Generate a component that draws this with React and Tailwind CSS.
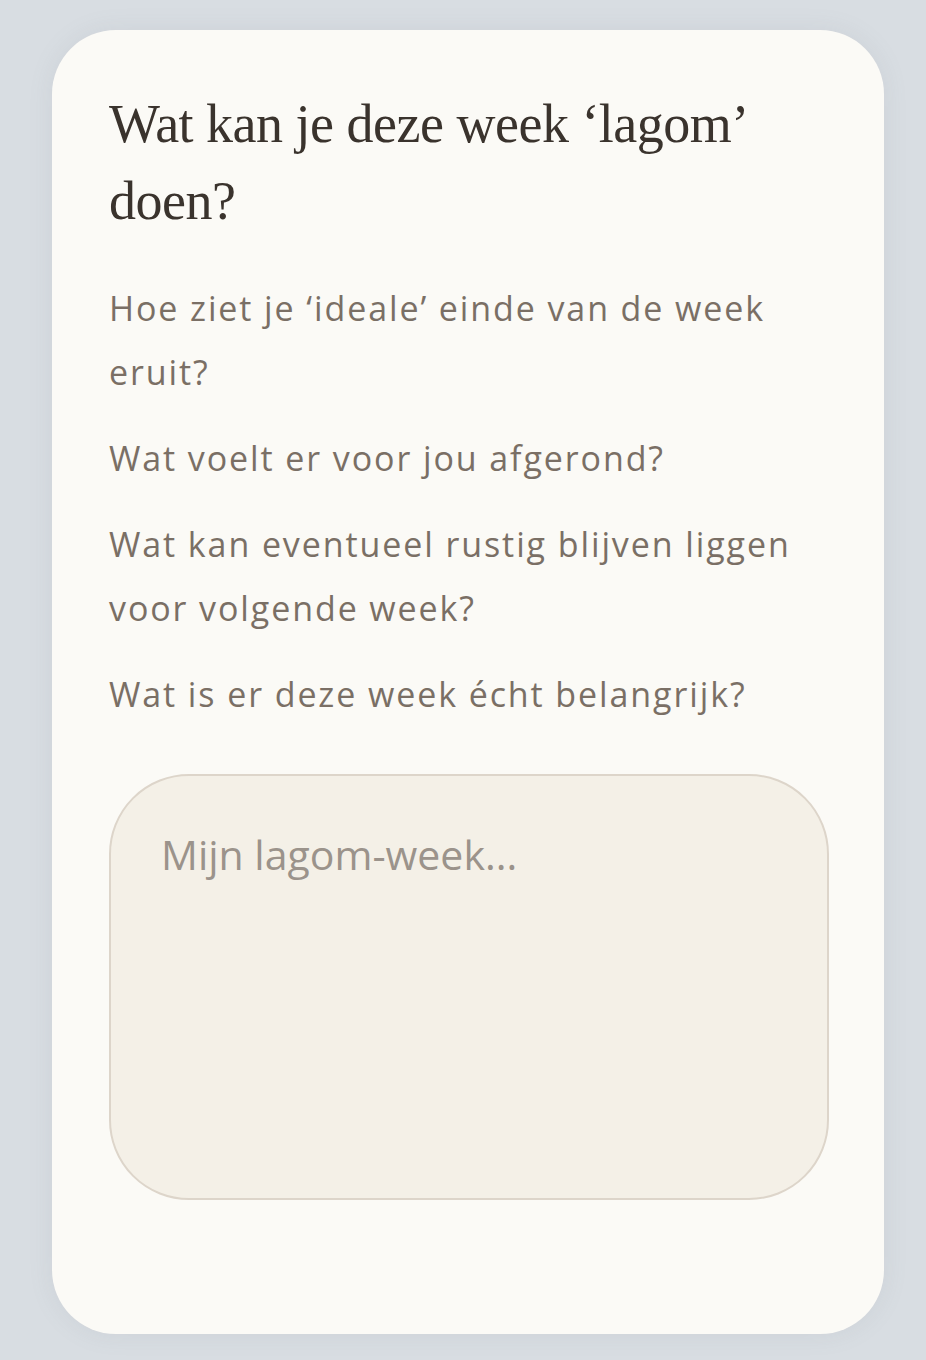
export default function App() {
  return (
    <div className="min-h-[1360px] w-full bg-[#d8dde2] pt-[30px] pb-[26px]">
      <div className="ml-[52px] flex h-[1304px] w-[832px] flex-col rounded-[64px] bg-[#fbfaf6] pl-[57px] pr-[56px] pt-[56px] shadow-[0_0_24px_rgba(120,130,140,0.12)]">
        <h1 className="font-['Liberation_Serif','DejaVu_Serif',serif] text-[54px] font-normal leading-[77px] tracking-[-0.5px] text-[#3a332d]">
          Wat kan je deze week ‘lagom’ doen?
        </h1>
        <div className="mt-[36px] flex flex-col gap-[22px] font-['Open_Sans','Noto_Sans',sans-serif] text-[34px] leading-[64px] tracking-[1.9px] text-[#7a6f65]">
          <p>Hoe ziet je ‘ideale’ einde van de week eruit?</p>
          <p>Wat voelt er voor jou afgerond?</p>
          <p>Wat kan eventueel rustig blijven liggen voor volgende week?</p>
          <p>Wat is er deze week écht belangrijk?</p>
        </div>
        <textarea
          placeholder="Mijn lagom-week..."
          className="mt-[48px] h-[426px] w-[720px] resize-none rounded-[80px] border-2 border-[#ddd5ca] bg-[#f4f0e7] px-[50px] pt-[52px] font-['Open_Sans','Noto_Sans',sans-serif] text-[41px] leading-[52px] text-[#7a6f65] outline-none placeholder:text-[#9b938b]"
        />
      </div>
    </div>
  );
}
